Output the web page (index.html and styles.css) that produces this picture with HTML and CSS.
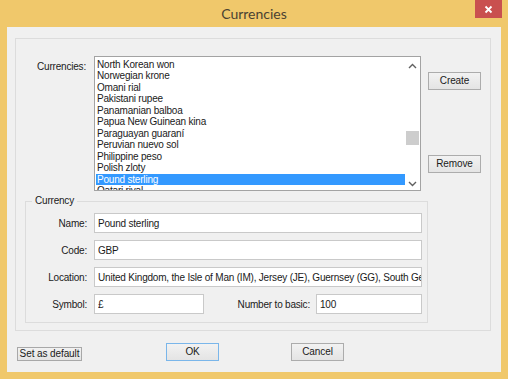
FILE: index.html
```html
<!DOCTYPE html>
<html>
<head>
<meta charset="utf-8">
<link rel="stylesheet" href="styles.css">
</head>
<body>
<div class="window">
  <div class="titlebar">
    <span></span>
    <span class="title">Currencies</span>
    <span class="close"><svg width="9" height="9" viewBox="0 0 9 9"><path d="M1.5 1.5L7.5 7.5M7.5 1.5L1.5 7.5" stroke="#fff" stroke-width="1.8"/></svg></span>
  </div>
  <div class="client">
    <div class="frame">
      <div class="top-row">
        <div class="lbl list-lbl">Currencies:</div>
        <div class="listbox">
          <div class="items">
            <div class="item">North Korean won</div>
            <div class="item">Norwegian krone</div>
            <div class="item">Omani rial</div>
            <div class="item">Pakistani rupee</div>
            <div class="item">Panamanian balboa</div>
            <div class="item">Papua New Guinean kina</div>
            <div class="item">Paraguayan guaraní</div>
            <div class="item">Peruvian nuevo sol</div>
            <div class="item">Philippine peso</div>
            <div class="item">Polish zloty</div>
            <div class="item selected">Pound sterling</div>
            <div class="item">Qatari riyal</div>
          </div>
          <div class="scrollbar">
            <svg class="arrow" width="9" height="6" viewBox="0 0 9 6"><path d="M1 5L4.5 1.5L8 5" fill="none" stroke="#606060" stroke-width="1.4"/></svg>
            <div class="track"><div class="thumb"></div></div>
            <svg class="arrow" width="9" height="6" viewBox="0 0 9 6"><path d="M1 1L4.5 4.5L8 1" fill="none" stroke="#606060" stroke-width="1.4"/></svg>
          </div>
        </div>
        <div class="side-buttons">
          <button class="btn side">Create</button>
          <button class="btn side">Remove</button>
        </div>
      </div>
      <fieldset class="group">
        <legend>Currency</legend>
        <div class="row">
          <div class="lbl field-lbl">Name:</div>
          <input class="field wide" value="Pound sterling">
        </div>
        <div class="row">
          <div class="lbl field-lbl">Code:</div>
          <input class="field wide" value="GBP">
        </div>
        <div class="row">
          <div class="lbl field-lbl">Location:</div>
          <input class="field wide" value="United Kingdom, the Isle of Man (IM), Jersey (JE), Guernsey (GG), South Georgia and the South Sandwich Islands (GS)">
        </div>
        <div class="row">
          <div class="lbl field-lbl">Symbol:</div>
          <input class="field symbol" value="£">
          <div class="lbl num-lbl">Number to basic:</div>
          <input class="field number" value="100">
        </div>
      </fieldset>
    </div>
    <div class="bottom-row">
      <button class="btn default-btn">Set as default</button>
      <button class="btn ok">OK</button>
      <button class="btn cancel">Cancel</button>
    </div>
  </div>
</div>
</body>
</html>
```

FILE: styles.css
```css
* { box-sizing: border-box; }
html, body { margin: 0; padding: 0; }
body {
  font-family: "Liberation Sans", Arial, sans-serif;
  font-size: 10px;
  letter-spacing: -0.2px;
  color: #1a1a1a;
  background: #f0c86b;
}
.window {
  width: 508px;
  height: 379px;
  background: #f0c86b;
  display: flex;
  flex-direction: column;
}
.titlebar {
  height: 27px;
  display: grid;
  grid-template-columns: 1fr auto 1fr;
  align-items: start;
}
.title {
  font-family: Lato, "Open Sans", sans-serif;
  font-size: 14px;
  letter-spacing: 0;
  color: #4a4232;
  padding-top: 6px;
  line-height: 16px;
}
.close {
  justify-self: end;
  margin-right: 6px;
  width: 27px;
  height: 18px;
  background: #c9504f;
  display: flex;
  align-items: center;
  justify-content: center;
}
.close svg { display: block; }
.client {
  flex: 1;
  margin: 0 7px 7px;
  background: #f0f0f0;
  padding: 11px 10px 0 8px;
}
.frame {
  height: 293px;
  border: 1px solid #dcdcdc;
}
.top-row {
  display: flex;
  margin-top: 17px;
}
.lbl { text-align: right; white-space: nowrap; }
.list-lbl {
  width: 70px;
  padding-top: 5px;
  margin-right: 8px;
}
.listbox {
  width: 327px;
  height: 135px;
  border: 1px solid #a3a3a3;
  background: #fff;
  display: flex;
  overflow: hidden;
}
.items {
  flex: 1;
  padding: 1.5px 0 0 1px;
  overflow: hidden;
}
.item {
  height: 11.5px;
  line-height: 11.5px;
  padding-left: 1px;
  white-space: nowrap;
}
.item.selected {
  background: #3399ff;
  color: #fff;
}
.scrollbar {
  width: 15px;
  display: flex;
  flex-direction: column;
  align-items: center;
  padding: 6px 0 3px;
}
.arrow { display: block; flex: none; }
.track {
  flex: 1;
  width: 100%;
  padding: 62px 1px 0;
}
.thumb {
  height: 14px;
  background: #cdcdcd;
}
.side-buttons {
  display: flex;
  flex-direction: column;
  gap: 65px;
  padding-top: 16px;
  margin-left: 7px;
}
.btn {
  font-family: "Liberation Sans", Arial, sans-serif;
  font-size: 10px;
  letter-spacing: -0.1px;
  color: #1a1a1a;
  border: 1px solid #acacac;
  background: linear-gradient(#f2f2f2, #e4e4e4);
  padding: 0;
  margin: 0;
  line-height: 14px;
}
.btn.side {
  width: 53px;
  height: 18px;
}
.group {
  margin: 4px 0 0 9px;
  width: 403px;
  border: 1px solid #dcdcdc;
  padding: 6px 5px 8px 0;
  display: flex;
  flex-direction: column;
  gap: 7px;
}
.group legend {
  margin-left: 6px;
  padding: 0 3px;
  line-height: 12px;
  font-size: 10px;
  color: #1a1a1a;
}
.row {
  display: flex;
  align-items: center;
  height: 20px;
}
.field-lbl {
  width: 61px;
  margin-right: 7px;
}
.field {
  height: 20px;
  border: 1px solid #c9c9c9;
  background: #fff;
  font-family: "Liberation Sans", Arial, sans-serif;
  font-size: 10px;
  letter-spacing: -0.2px;
  color: #1a1a1a;
  padding: 0 0 0 3px;
  margin: 0;
  outline: none;
}
.field.wide { width: 328px; }
.field.symbol { width: 110px; }
.num-lbl {
  width: 106px;
  margin-right: 6px;
}
.field.number { width: 106px; }
.bottom-row {
  display: flex;
  align-items: flex-end;
  margin-top: 12px;
  height: 18px;
}
.default-btn {
  width: 65px;
  height: 14px;
  margin-left: 2px;
  line-height: 12px;
  border-color: #a8a8a8;
}
.ok {
  width: 53px;
  height: 18px;
  margin-left: 84px;
  border-color: #7ab6ea;
}
.cancel {
  width: 53px;
  height: 18px;
  margin-left: 72px;
}
```
